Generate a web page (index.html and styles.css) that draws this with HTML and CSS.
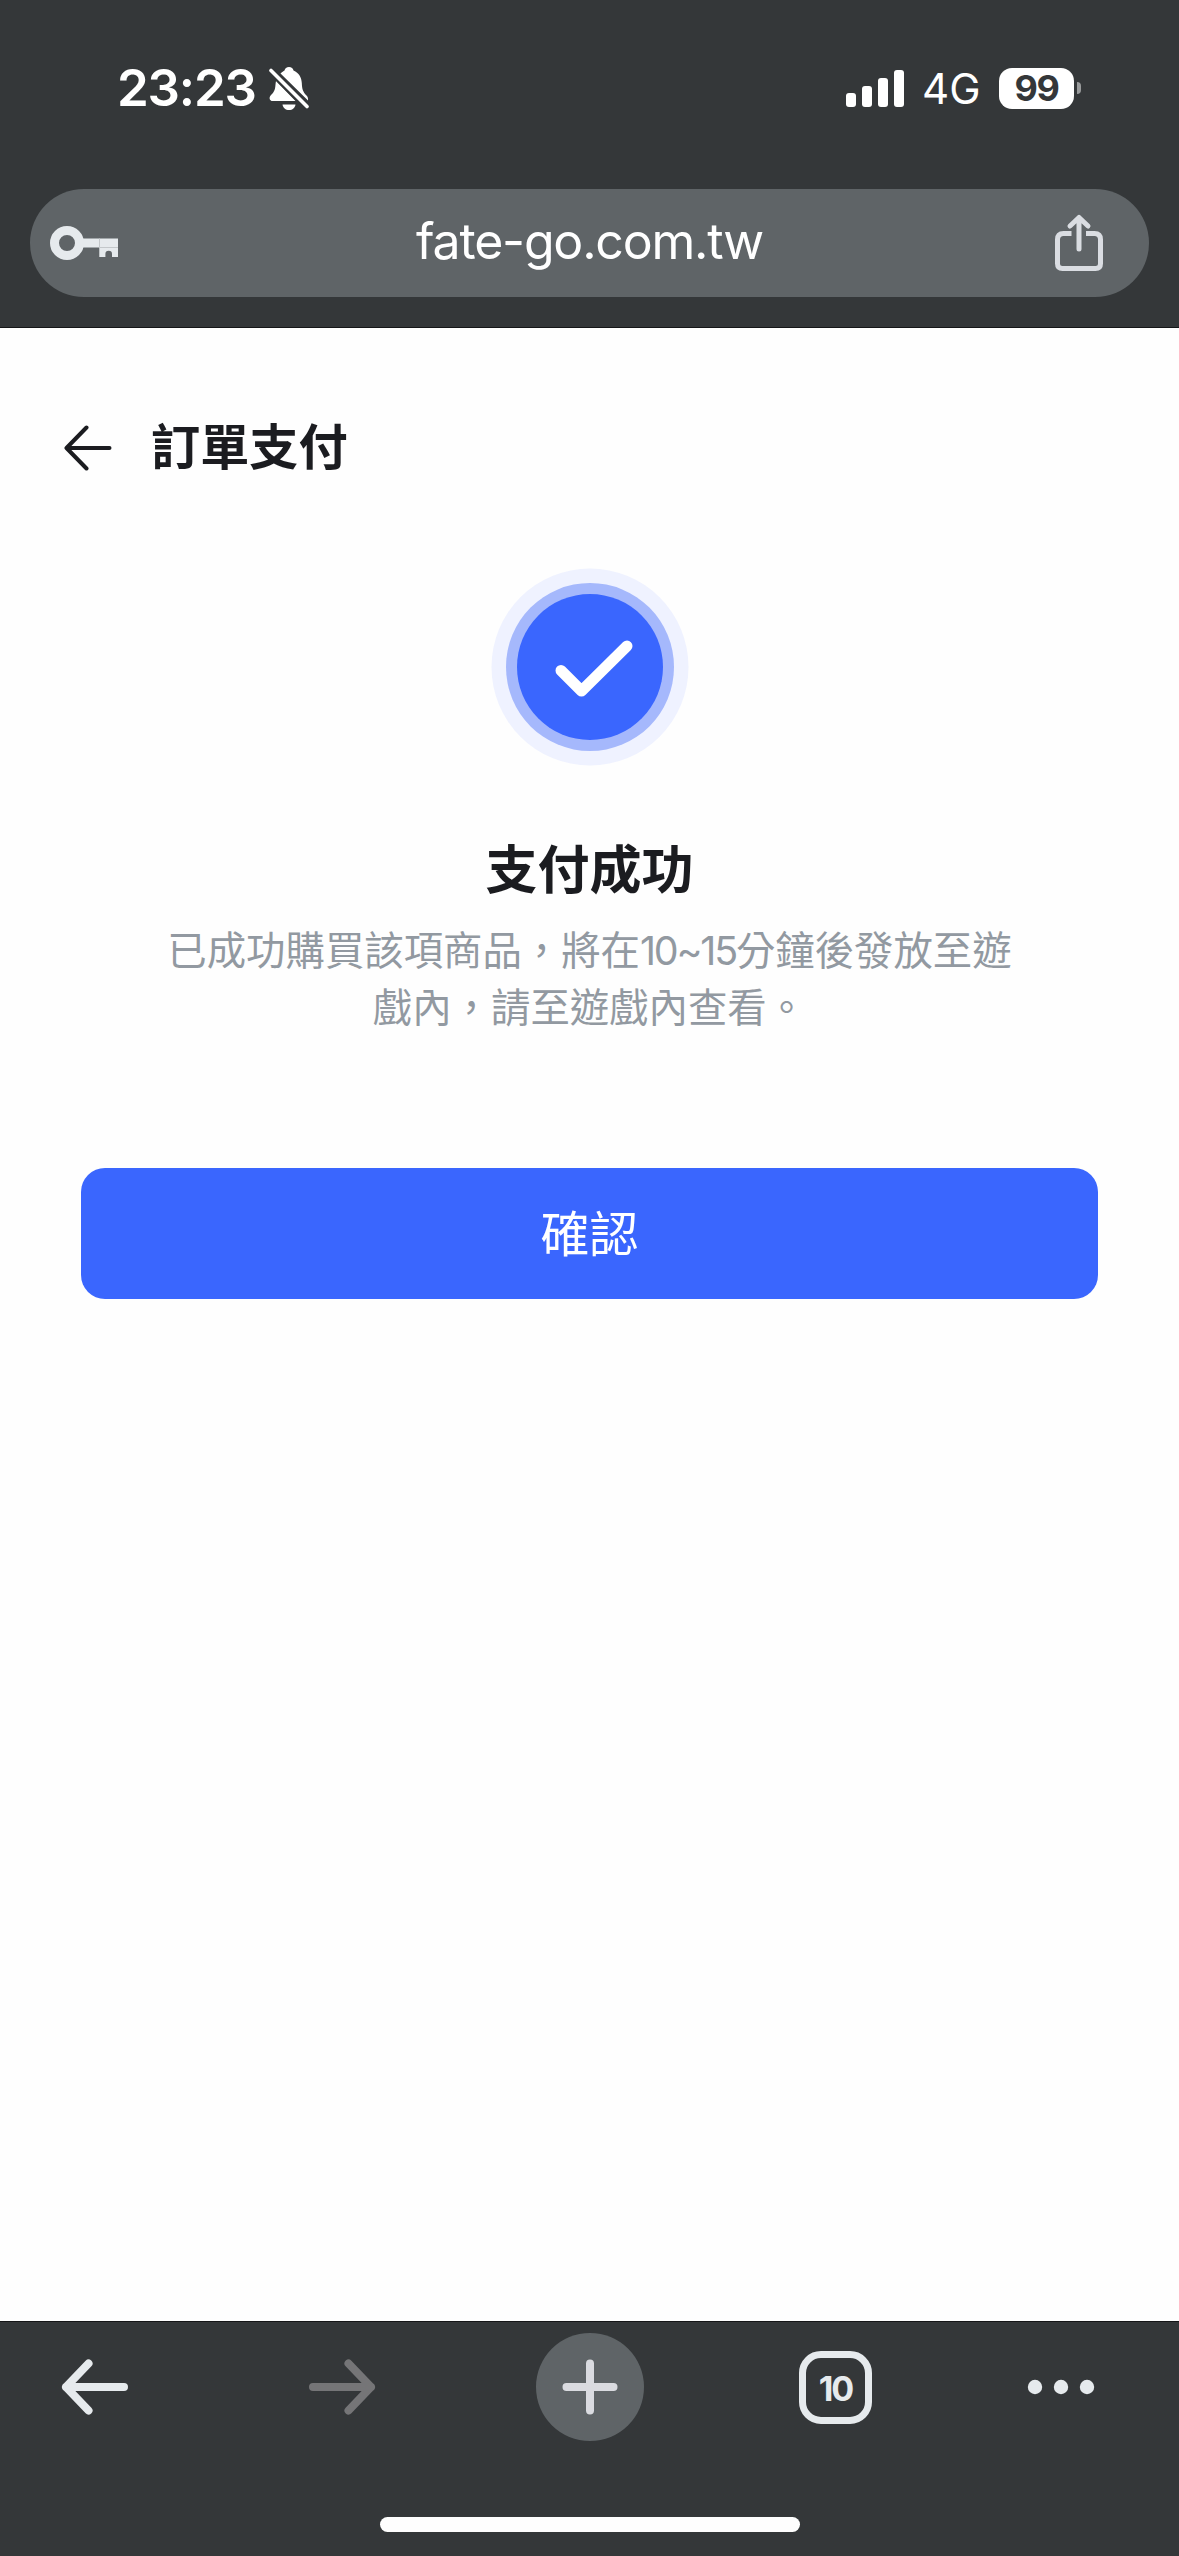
FILE: index.html
```html
<!doctype html>
<html lang="zh-Hant">
    <head>
        <meta charset="utf-8">
        <title>訂單支付</title>
        <link rel="stylesheet" href="styles.css">
    </head>
    <body>
        <header class="browser-top">
            <div class="status-bar">
                <span class="time">23:23</span>
                <svg class="bell" width="40" height="44" viewBox="0 0 40 44">
                    <path fill="#fff" d="M11.5 6.5 C13 5 14.5 4.3 15.5 3.6 C16 1.4 17.5 0 20 0 C22.500 0 24 1.400 24.500 3.600 C30 6 32.500 10.500 32.800 16 C33 22 34 25 37.500 28.500 C38.800 29.900 39.300 31.500 39 33.500 Z" />
                    <path fill="#fff" d="M7 14 L26.500 34 H3.500 C1 34 0 31.500 1 29.500 C2 27.500 5 26 6 21.500 C6.600 19 6.500 16 7 14 Z" />
                    <path fill="#fff" d="M13.500 37.500 H26.500 C26 41 23.500 43 20 43 C16.500 43 14 41 13.500 37.500 Z" />
                    <line x1="2" y1="3.500" x2="38" y2="39.500" stroke="#343739" stroke-width="7.500" />
                    <line x1="2" y1="3.500" x2="38" y2="39.500" stroke="#fff" stroke-width="3.600" stroke-linecap="round" />
                </svg>
                <div class="signal">
                    <i class="bar bar1"></i>
                    <i class="bar bar2"></i>
                    <i class="bar bar3"></i>
                    <i class="bar bar4"></i>
                </div>
                <span class="network">4G</span>
                <span class="battery">99</span>
                <i class="battery-tip"></i>
            </div>
            <div class="address-bar">
                <svg width="70" height="40" viewBox="0 0 70 40">
                    <circle cx="17" cy="20" r="12.500" fill="none" stroke="#e6eaed" stroke-width="9" />
                    <path fill="#e6eaed" d="M33 15.500 H68 V34 H62 V31 A3.300 3.300 0 0 0 55.400 31 V34 H49.300 V24.500 H33 Z" />
                    <path fill="none" stroke="#c3c7ca" stroke-width="1" d="M49.500 15.500 V24.500 H68" />
                </svg>
                <span class="url">fate-go.com.tw</span>
                <svg width="48" height="58" viewBox="0 0 48 58" fill="none" stroke="#dadde2" stroke-width="5">
                    <path d="M16.500 19.500 H8.500 Q2.500 19.500 2.500 25.500 V49.500 Q2.500 54.500 7.500 54.500 H40.500 Q45.500 54.500 45.500 49.500 V25.500 Q45.500 19.500 39.500 19.500 H31" />
                    <path stroke-linecap="round" stroke-linejoin="round" d="M24 35 V3.500 M15 12 L24 3.500 L33 12" />
                </svg>
            </div>
        </header>

        <main class="page">
            <div class="page-title">
                <svg width="48" height="48" viewBox="0 0 48 48" fill="none" stroke="#1b1c20" stroke-width="4" stroke-linecap="round" stroke-linejoin="round">
                    <path d="M45.500 24 H3 M22.500 3.500 L2.500 24 L22.500 44.500" />
                </svg>
                <h1>訂單支付</h1>
            </div>
            <section class="result">
                <svg width="198" height="198" viewBox="0 0 198 198">
                    <circle cx="99" cy="99" r="98.500" fill="#eff2ff" />
                    <circle cx="99" cy="99" r="84" fill="#a5b8fc" />
                    <circle cx="99" cy="99" r="73" fill="#3a66fe" />
                    <path d="M70 102.500 L90.500 123 L136 78" fill="none" stroke="#fff" stroke-width="11" stroke-linecap="round" stroke-linejoin="round" />
                </svg>
                <h2>支付成功</h2>
                <p>已成功購買該項商品，將在<span class="num">10~15</span>分鐘後發放至遊<br>戲內，請至遊戲內查看。</p>
            </section>
            <button class="confirm">確認</button>
        </main>

        <footer class="toolbar">
            <div class="tools">
                <svg width="68" height="56" viewBox="0 0 68 56" fill="none" stroke="#e6eaed" stroke-width="8" stroke-linecap="round" stroke-linejoin="round">
                    <path d="M63 28 H5 M27.500 4.500 L5 28 L27.500 51.500" />
                </svg>
                <svg class="forward" width="68" height="56" viewBox="0 0 68 56" fill="none" stroke="#757577" stroke-width="8" stroke-linecap="round" stroke-linejoin="round">
                    <path d="M5 28 H63 M40.500 4.500 L63 28 L40.500 51.500" />
                </svg>
                <div class="new-tab">
                    <svg width="56" height="56" viewBox="0 0 56 56" stroke="#dadbe0" stroke-width="8" stroke-linecap="round">
                        <path d="M28 4.500 V51.500 M4.500 28 H51.500" />
                    </svg>
                </div>
                <div class="tabs">10</div>
                <svg width="68" height="16" viewBox="0 0 68 16" fill="#e6eaed">
                    <circle cx="8" cy="8" r="7.200" />
                    <circle cx="34" cy="8" r="7.200" />
                    <circle cx="60" cy="8" r="7.200" />
                </svg>
            </div>
            <div class="home-indicator"></div>
        </footer>
    </body>
</html>
```
FILE: styles.css
```css
* {
    box-sizing: border-box;
}

body {
    margin: 0;
    width: 1179px;
    height: 2556px;
    display: flex;
    flex-direction: column;
    background: #fefefe;
    font-family: "Inter", "Noto Sans CJK TC", sans-serif;
}

svg {
    display: block;
    flex: none;
}

.browser-top {
    height: 328px;
    padding: 58px 30px 0;
    background: #343739;
    border-bottom: 1px solid #151618;
    color: #fff;
}

.status-bar {
    display: flex;
    align-items: center;
    height: 60px;
    padding: 0 68px 0 87px;
}

.time {
    width: 152px;
    font-size: 51px;
    font-weight: 600;
    letter-spacing: -1.2px;
    line-height: 60px;
}

.bell {
    margin-top: 1px;
}

.signal {
    display: flex;
    align-items: flex-end;
    gap: 6px;
    height: 37px;
    margin-left: auto;
}

.bar {
    width: 10px;
    border-radius: 3px;
    background: #fff;
}

.bar1 {
    height: 14px;
}

.bar2 {
    height: 21px;
}

.bar3 {
    height: 29px;
}

.bar4 {
    height: 37px;
}

.network {
    width: 79px;
    padding: 2px 0 0 18px;
    margin-right: 16px;
    font-size: 42px;
    line-height: 60px;
}

.battery {
    width: 75px;
    height: 41px;
    border-radius: 13px;
    background: #fff;
    color: #343739;
    font-size: 36px;
    font-weight: 650;
    letter-spacing: -1.5px;
    line-height: 41px;
    text-align: center;
}

.battery-tip {
    width: 4px;
    height: 12px;
    margin-left: 3px;
    border-radius: 0 4px 4px 0;
    background: #999b9c;
}

.address-bar {
    display: flex;
    align-items: center;
    justify-content: space-between;
    height: 108px;
    margin-top: 71px;
    padding: 0 46px 0 20px;
    border-radius: 54px;
    background: #5f6467;
}

.url {
    padding: 0 0 4px 4px;
    font-size: 50px;
    letter-spacing: -1.2px;
    line-height: 60px;
}

.page {
    flex: 1;
    padding: 83px 81px 0;
    color: #1b1c20;
}

.page-title {
    display: flex;
    align-items: center;
    gap: 39px;
    height: 74px;
    margin-left: -17px;
}

h1 {
    margin: 0;
    padding-bottom: 2px;
    font-size: 49.2px;
    font-weight: 700;
    line-height: 72px;
}

.result {
    display: flex;
    flex-direction: column;
    align-items: center;
    margin-top: 83px;
    text-align: center;
}

h2 {
    margin: 65px 0 0;
    font-size: 52px;
    font-weight: 700;
    line-height: 80px;
}

p {
    margin: 12px 0 0;
    color: #9299a1;
    font-size: 39.4px;
    line-height: 57px;
    white-space: nowrap;
}

.num {
    letter-spacing: -2.2px;
}

.confirm {
    display: block;
    width: 1017px;
    height: 131px;
    margin-top: 131px;
    padding: 0 0 6px;
    border: 0;
    border-radius: 24px;
    background: #3a66fe;
    color: #fff;
    font: 49px "Noto Sans CJK TC", sans-serif;
}

.toolbar {
    height: 235px;
    padding-top: 11px;
    background: #343739;
    border-top: 1px solid #151618;
}

.tools {
    display: flex;
    align-items: center;
    gap: 155px;
    height: 108px;
    padding-left: 61px;
}

.forward {
    margin: 0 5px 0 24px;
}

.new-tab {
    display: flex;
    align-items: center;
    justify-content: center;
    width: 108px;
    height: 108px;
    border-radius: 50%;
    background: #5f6467;
}

.tabs {
    width: 73px;
    height: 73px;
    border: 7px solid #e6eaed;
    border-radius: 22px;
    color: #e6eaed;
    font-size: 34px;
    font-weight: 700;
    letter-spacing: -2px;
    line-height: 61px;
    text-align: center;
}

.home-indicator {
    width: 420px;
    height: 15px;
    margin: 76px auto 0;
    border-radius: 8px;
    background: #fefefe;
}
```
